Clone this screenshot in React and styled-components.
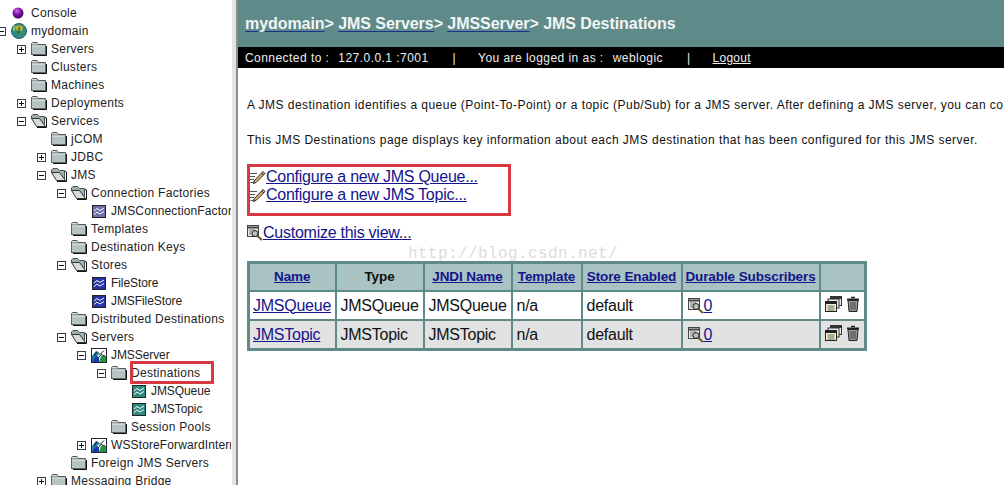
import React from 'react'
import styled, { createGlobalStyle } from 'styled-components'

const Global = createGlobalStyle`
  html, body { margin: 0; padding: 0; background: #fff; overflow: hidden; }
  body { font-family: "Liberation Sans", Arial, sans-serif; }
`

const Page = styled.div`
  position: relative;
  display: flex;
  width: 1004px;
  height: 485px;
  overflow: hidden;
`

const Sidebar = styled.div`
  width: 231px;
  height: 485px;
  padding-top: 4px;
  box-sizing: border-box;
  overflow: hidden;
  flex: none;
`

const Divider = styled.div`
  width: 4px;
  flex: none;
  background: #e4e4e4;
  border-right: 2px solid #8c8c8c;
  margin-left: 1px;
`

const Row = styled.div`
  display: flex;
  align-items: center;
  height: 18px;
  margin-left: ${p => p.$left}px;
  white-space: nowrap;
`

const ToggleSlot = styled.span`
  width: 9px;
  height: 9px;
  margin-right: 5px;
  flex: none;
  display: flex;
`

const IconSlot = styled.span`
  width: ${p => p.$w}px;
  height: 16px;
  flex: none;
  display: flex;
  align-items: center;
  justify-content: center;
  margin-right: ${p => p.$after}px;
`

const Label = styled.span`
  font-size: 12px;
  letter-spacing: ${p => p.$spacing}px;
  color: #222;
`

const Main = styled.div`
  width: 766px;
  flex: none;
  overflow: hidden;
`

const Header = styled.div`
  height: 47px;
  box-sizing: border-box;
  background: #5f8a8a;
  padding: 15px 0 0 7px;
  color: #f2f5f5;
  font-size: 16px;
  letter-spacing: -0.06px;
  font-weight: bold;
  white-space: nowrap;
`

const Crumb = styled.span`
  text-decoration: underline;
  text-decoration-color: #1c2f8c;
  text-underline-offset: 2px;
`

const StatusBar = styled.div`
  display: flex;
  align-items: center;
  height: 21px;
  background: #000;
  color: #efefef;
  font-size: 12px;
  letter-spacing: 0.45px;
  padding-left: 7px;
  white-space: nowrap;
`

const StatusText = styled.span`
  margin-right: ${p => p.$after || 0}px;
`

const StatusSep = styled.span`
  margin: 0 22px 0 24px;
`

const Logout = styled.span`
  letter-spacing: 0.25px;
  text-decoration: underline;
`

const Content = styled.div`
  padding: 29px 0 0 9px;
`

const Para = styled.p`
  margin: 0 0 ${p => p.$after}px;
  font-size: 12px;
  line-height: 16px;
  letter-spacing: 0.46px;
  color: #111;
  white-space: nowrap;
`

const ActionRow = styled.div`
  display: flex;
  align-items: center;
  height: 18px;
  margin-bottom: ${p => p.$after || 0}px;
`

const BigLink = styled.a`
  font-size: 16px;
  letter-spacing: -0.25px;
  color: #14148c;
  text-decoration: underline;
  white-space: nowrap;
`

const Table = styled.table`
  border-collapse: collapse;
  table-layout: fixed;
  width: 617px;
  border: 3px solid #5f8a8a;
`

const Th = styled.th`
  height: 24px;
  padding: 0 0 2px;
  background: #a9c3c3;
  border: 2px solid #5f8a8a;
  font-size: 13.5px;
  letter-spacing: -0.1px;
  font-weight: bold;
  text-align: center;
  color: #111;
  white-space: nowrap;
`

const ThLink = styled.a`
  color: #14148c;
  text-decoration: underline;
`

const Td = styled.td`
  height: 27px;
  padding: 0 0 0 4px;
  background: ${p => (p.$alt ? '#e2e2e2' : '#fff')};
  border: 2px solid #5f8a8a;
  font-size: 16px;
  letter-spacing: -0.25px;
  color: #111;
  white-space: nowrap;

  &:first-child {
    padding-left: 3px;
  }
`

const CellLink = styled.a`
  color: #14148c;
  text-decoration: underline;
`

const SubscriberCell = styled.div`
  display: flex;
  align-items: center;
  padding-left: 1px;
`

const ActionsCell = styled.div`
  display: flex;
  align-items: center;
  gap: 4px;
  padding-bottom: 4px;
`

// red annotation boxes drawn over the screenshot
const RedBox = styled.div`
  position: absolute;
  left: ${p => p.$x}px;
  top: ${p => p.$y}px;
  width: ${p => p.$w}px;
  height: ${p => p.$h}px;
  box-sizing: border-box;
  border: 3px solid #d8383f;
`

const Watermark = styled.div`
  position: absolute;
  left: 408px;
  top: 245px;
  font-family: "Liberation Mono", monospace;
  font-size: 16px;
  letter-spacing: 0.4px;
  color: #dcdcdc;
  white-space: nowrap;
`

const Toggle = ({ open }) => (
  <svg width="9" height="9" viewBox="0 0 9 9">
    <rect x="0.5" y="0.5" width="8" height="8" fill="#fff" stroke="#33404a" />
    <path d="M2 4.5h5" stroke="#111" />
    {!open && <path d="M4.5 2v5" stroke="#111" />}
  </svg>
)

const Folder = () => (
  <svg width="16" height="14" viewBox="0 0 16 14">
    <path d="M0.5 3.5V1.5L1.5 0.5H6L7.5 2.5H14.5V3.5" fill="#d8dcdc" stroke="#555" />
    <rect x="0.5" y="3" width="14" height="9.5" fill="#b6c3c3" stroke="#5a6464" />
    <path d="M1 4h13" stroke="#e9eeee" />
    <path d="M15.5 4v9.5H2" stroke="#111" fill="none" />
  </svg>
)

const OpenFolder = () => (
  <svg width="16" height="14" viewBox="0 0 16 14">
    <path d="M0.5 5V2L2 0.5H6.5L8.5 2.5H13.5V12" fill="#9fb0b0" stroke="#4a5555" />
    <path d="M0.5 4.5H8.5L14.5 12.5H5.5Z" fill="#d5dddd" stroke="#333" />
    <path d="M14 3.5L15.5 4V13.5H6" stroke="#111" fill="none" />
  </svg>
)

const Ball = () => (
  <svg width="12" height="12" viewBox="0 0 12 12">
    <defs>
      <radialGradient id="ball" cx="0.4" cy="0.3" r="0.75">
        <stop offset="0" stopColor="#c870e0" />
        <stop offset="0.5" stopColor="#7a10a8" />
        <stop offset="1" stopColor="#2e0650" />
      </radialGradient>
    </defs>
    <circle cx="6" cy="6" r="5.5" fill="url(#ball)" />
  </svg>
)

const Globe = () => (
  <svg width="16" height="16" viewBox="0 0 16 16">
    <circle cx="8" cy="8" r="7.5" fill="#2c8a8a" stroke="#1d5c5c" />
    <path d="M4 3.5C6 2 10 2 12 3.5L11 8 8.5 13 6 8Z" fill="#c9b02c" />
    <path d="M8 4v6M6 8l2 3 2-3" stroke="#2c7a2c" strokeWidth="1.6" fill="none" />
    <path d="M1.5 6C2 4 3 3 4 2.5L4.5 6 3 9Z" fill="#7fc46a" />
  </svg>
)

const Chart = ({ tone }) => {
  const fills = { lilac: '#6f6fb0', blue: '#2632a8', teal: '#2f8a80' }
  return (
    <svg width="14" height="13" viewBox="0 0 14 13">
      <rect x="0.5" y="0.5" width="13" height="12" fill={fills[tone]} stroke="#222" />
      <path d="M2 6L5 3.5 8 5.5 12 3M2 9.5L5 7 8 9 12 6.5" stroke="#fff" fill="none" />
    </svg>
  )
}

const ServerIcon = () => (
  <svg width="16" height="15" viewBox="0 0 16 15">
    <rect x="0.5" y="0.5" width="15" height="14" fill="#fff" stroke="#223" />
    <path d="M1 14V8L5 3 8 6 1 14Z" fill="#1f7f9c" />
    <path d="M1 14h7V9L5 8Z" fill="#1f35b0" />
    <path d="M8 14h7V8H10Z" fill="#1f9c3a" />
    <path d="M3 8L6 3.5 9 6.5 13 2.5M7 10L10 6.5 14 8" stroke="#123" fill="none" />
  </svg>
)

const Pencil = () => (
  <svg width="19" height="16" viewBox="0 0 19 16">
    <path d="M1.5 4.5H10M1.5 7.5H8M2.5 10.5H7M3.5 13.5H6" stroke="#555" />
    <path d="M7 12L16 2.5 18 4.5 9 13.5 6.5 14.5Z" fill="#e2b46a" stroke="#222" />
    <path d="M14.5 4L16.5 6" stroke="#222" />
  </svg>
)

const ViewGlass = () => (
  <svg width="16" height="16" viewBox="0 0 16 16">
    <rect x="0.5" y="0.5" width="11" height="11" fill="#eee" stroke="#444" />
    <path d="M0.5 2.5h11" stroke="#444" strokeWidth="2" />
    <path d="M2 5h6M2 7h3M2 9h3" stroke="#777" />
    <circle cx="8" cy="8.5" r="3" fill="#b8c4b4" stroke="#222" />
    <path d="M10.5 11L15 15" stroke="#6a5a20" strokeWidth="2" />
  </svg>
)

const CopyIcon = () => (
  <svg width="17" height="16" viewBox="0 0 17 16">
    <rect x="5.5" y="0.5" width="11" height="9" fill="#ececec" stroke="#333" />
    <path d="M5 2h11" stroke="#333" strokeWidth="2" />
    <rect x="3" y="3" width="11" height="9" fill="#ececec" stroke="#333" />
    <rect x="0.5" y="5.5" width="11" height="10" fill="#f4f2cf" stroke="#222" />
    <path d="M1 7h10" stroke="#222" strokeWidth="2" />
    <path d="M2.5 10h7M2.5 12h7M2.5 14h7" stroke="#666" />
  </svg>
)

const Trash = () => (
  <svg width="14" height="16" viewBox="0 0 14 16">
    <path d="M5 1.5h4" stroke="#222" strokeWidth="1.5" />
    <path d="M1 3.5h12" stroke="#222" strokeWidth="2" />
    <path d="M2 4.5h10L11 15.5H3Z" fill="#9a9a9a" stroke="#222" />
    <path d="M5 6v8M7 6v8M9 6v8" stroke="#444" />
  </svg>
)

const treeRows = [
  { text: 'Console', left: 12, icon: <Ball />, w: 12, after: 7 },
  { text: 'mydomain', left: -3, toggle: 'open', icon: <Globe /> },
  { text: 'Servers', left: 17, toggle: 'closed', icon: <Folder /> },
  { text: 'Clusters', left: 31, icon: <Folder /> },
  { text: 'Machines', left: 31, icon: <Folder /> },
  { text: 'Deployments', left: 17, toggle: 'closed', icon: <Folder /> },
  { text: 'Services', left: 17, toggle: 'open', icon: <OpenFolder /> },
  { text: 'jCOM', left: 51, icon: <Folder /> },
  { text: 'JDBC', left: 37, toggle: 'closed', icon: <Folder /> },
  { text: 'JMS', left: 37, toggle: 'open', icon: <OpenFolder /> },
  { text: 'Connection Factories', left: 57, toggle: 'open', icon: <OpenFolder /> },
  { text: 'JMSConnectionFactory', left: 91, icon: <Chart tone="lilac" />, spacing: 0.12 },
  { text: 'Templates', left: 71, icon: <Folder /> },
  { text: 'Destination Keys', left: 71, icon: <Folder /> },
  { text: 'Stores', left: 57, toggle: 'open', icon: <OpenFolder /> },
  { text: 'FileStore', left: 91, icon: <Chart tone="blue" />, spacing: -0.08 },
  { text: 'JMSFileStore', left: 91, icon: <Chart tone="blue" />, spacing: -0.08 },
  { text: 'Distributed Destinations', left: 71, icon: <Folder /> },
  { text: 'Servers', left: 57, toggle: 'open', icon: <OpenFolder /> },
  { text: 'JMSServer', left: 77, toggle: 'open', icon: <ServerIcon />, spacing: -0.08 },
  { text: 'Destinations', left: 97, toggle: 'open', icon: <Folder /> },
  { text: 'JMSQueue', left: 131, icon: <Chart tone="teal" />, spacing: -0.08 },
  { text: 'JMSTopic', left: 131, icon: <Chart tone="teal" />, spacing: -0.08 },
  { text: 'Session Pools', left: 111, icon: <Folder /> },
  { text: 'WSStoreForwardInternal', left: 77, toggle: 'closed', icon: <ServerIcon />, spacing: 0.12 },
  { text: 'Foreign JMS Servers', left: 71, icon: <Folder /> },
  { text: 'Messaging Bridge', left: 37, toggle: 'closed', icon: <Folder /> },
]

const columns = [87, 88, 88, 70, 100, 138, 46]
const destinations = ['JMSQueue', 'JMSTopic']

function App() {
  return (
    <Page>
      <Global />
      <Sidebar>
        {treeRows.map((r, i) => (
          <Row key={i} $left={r.left}>
            {r.toggle && (
              <ToggleSlot>
                <Toggle open={r.toggle === 'open'} />
              </ToggleSlot>
            )}
            <IconSlot $w={r.w || 16} $after={r.after || 4}>
              {r.icon}
            </IconSlot>
            <Label $spacing={r.spacing ?? 0.28}>{r.text}</Label>
          </Row>
        ))}
      </Sidebar>
      <Divider />
      <Main>
        <Header>
          <Crumb>mydomain</Crumb>&gt; <Crumb>JMS Servers</Crumb>&gt; <Crumb>JMSServer</Crumb>&gt; JMS Destinations
        </Header>
        <StatusBar>
          <StatusText $after={9}>Connected to :</StatusText>
          <StatusText>127.0.0.1 :7001</StatusText>
          <StatusSep>|</StatusSep>
          <StatusText $after={9}>You are logged in as :</StatusText>
          <StatusText>weblogic</StatusText>
          <StatusSep>|</StatusSep>
          <Logout>Logout</Logout>
        </StatusBar>
        <Content>
          <Para $after={19}>
            A JMS destination identifies a queue (Point-To-Point) or a topic (Pub/Sub) for a JMS server. After defining a JMS server, you can configure destinations for it.
          </Para>
          <Para $after={20}>
            This JMS Destinations page displays key information about each JMS destination that has been configured for this JMS server.
          </Para>
          <ActionRow>
            <Pencil />
            <BigLink>Configure a new JMS Queue...</BigLink>
          </ActionRow>
          <ActionRow $after={20}>
            <Pencil />
            <BigLink>Configure a new JMS Topic...</BigLink>
          </ActionRow>
          <ActionRow $after={19}>
            <ViewGlass />
            <BigLink>Customize this view...</BigLink>
          </ActionRow>
          <Table>
            <colgroup>
              {columns.map((w, i) => (
                <col key={i} width={w} />
              ))}
            </colgroup>
            <thead>
              <tr>
                <Th><ThLink>Name</ThLink></Th>
                <Th>Type</Th>
                <Th><ThLink>JNDI Name</ThLink></Th>
                <Th><ThLink>Template</ThLink></Th>
                <Th><ThLink>Store Enabled</ThLink></Th>
                <Th><ThLink>Durable Subscribers</ThLink></Th>
                <Th />
              </tr>
            </thead>
            <tbody>
              {destinations.map((name, i) => (
                <tr key={name}>
                  <Td $alt={i === 1}><CellLink>{name}</CellLink></Td>
                  <Td $alt={i === 1}>{name}</Td>
                  <Td $alt={i === 1}>{name}</Td>
                  <Td $alt={i === 1}>n/a</Td>
                  <Td $alt={i === 1}>default</Td>
                  <Td $alt={i === 1}>
                    <SubscriberCell>
                      <ViewGlass />
                      <CellLink>0</CellLink>
                    </SubscriberCell>
                  </Td>
                  <Td $alt={i === 1}>
                    <ActionsCell>
                      <CopyIcon />
                      <Trash />
                    </ActionsCell>
                  </Td>
                </tr>
              ))}
            </tbody>
          </Table>
        </Content>
      </Main>
      <RedBox $x={130} $y={361} $w={84} $h={23} />
      <RedBox $x={247} $y={164} $w={264} $h={52} />
      <Watermark>http://blog.csdn.net/</Watermark>
    </Page>
  )
}

export default App
